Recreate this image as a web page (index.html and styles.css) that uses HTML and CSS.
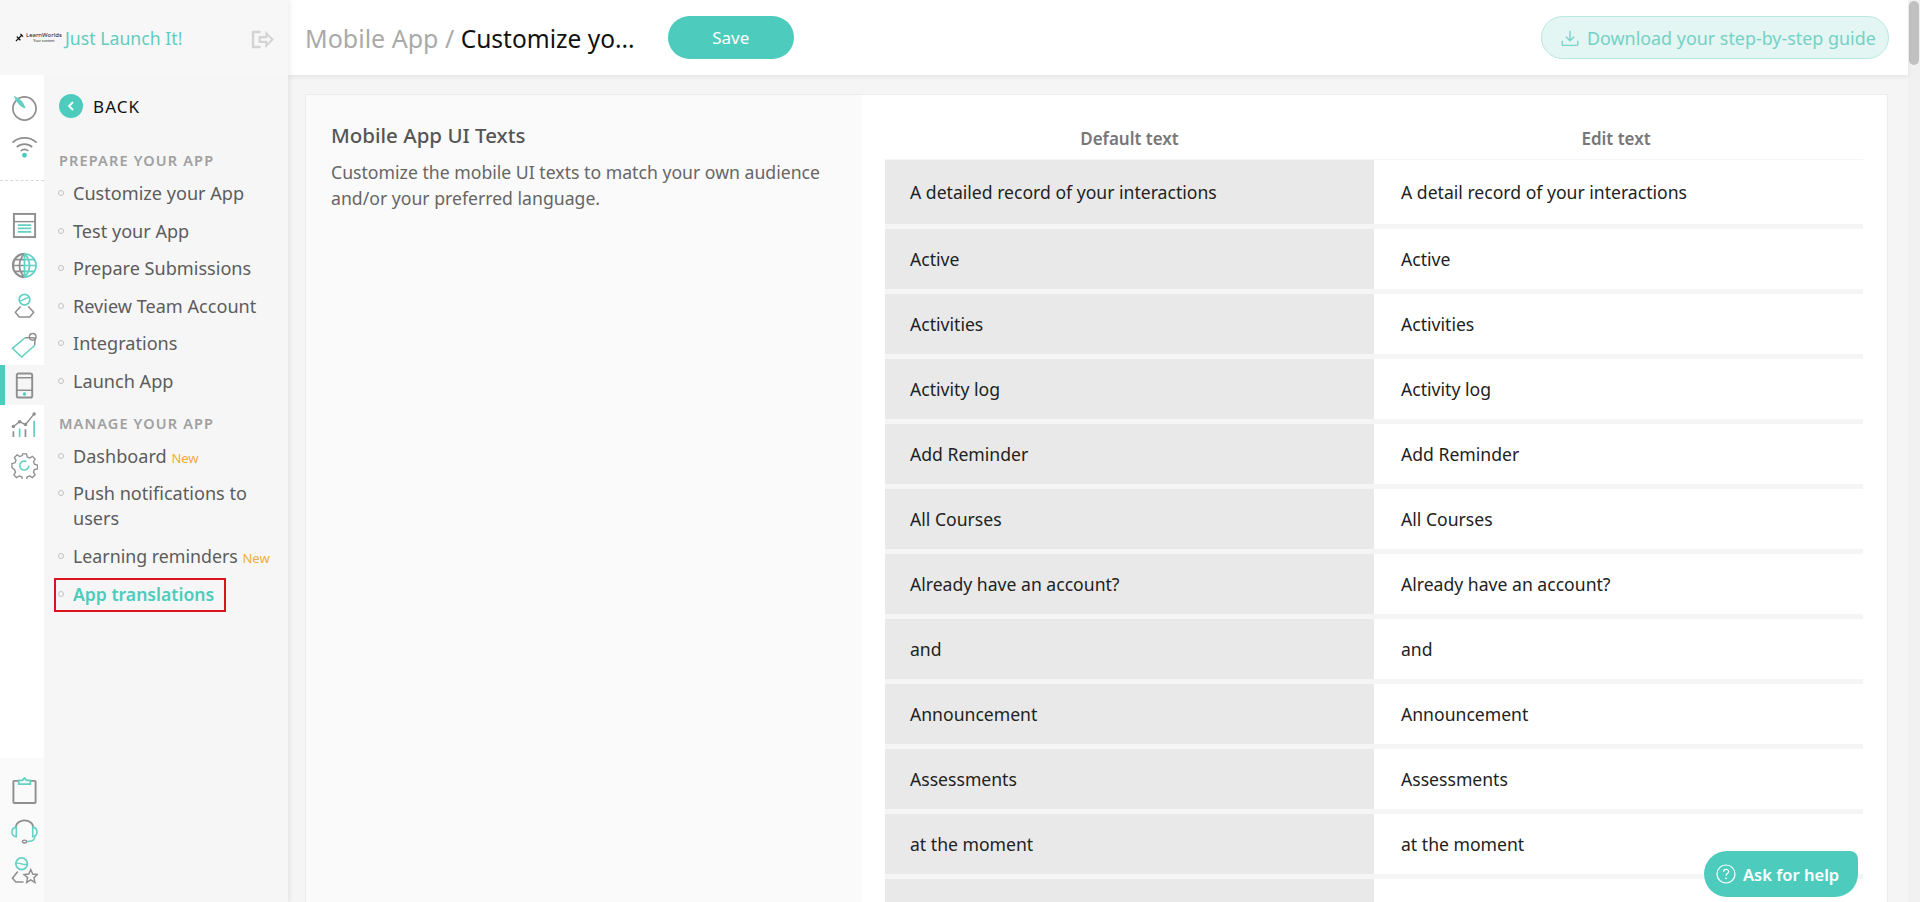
FILE: index.html
```html
<!DOCTYPE html>
<html lang="en">
<head>
<meta charset="utf-8">
<title>Mobile App / Customize your App</title>
<link rel="stylesheet" href="styles.css">
</head>
<body>
<div class="app">
  <aside class="sidebar">
    <div class="brand">
      <div class="logo">
        <svg class="logo-mark" viewBox="0 0 10 10"><path d="M1 9 8 2M2 4l4 4M6 1l3 3" fill="none" stroke="#111" stroke-width="1.4"/></svg>
        <div class="logo-words"><span class="logo-name">LearnWorlds</span><span class="logo-sub">Your content</span></div>
      </div>
      <span class="brand-name">Just Launch It!</span>
      <svg class="exit" viewBox="0 0 24 20"><path d="M10 2H2v16h8" fill="none" stroke="#d4d4d4" stroke-width="2.6"/><path d="M9 7.500h7V3.500l6.500 6.500-6.500 6.500v-4H9z" fill="none" stroke="#d4d4d4" stroke-width="2.200"/></svg>
    </div>
    <div class="side-body">
      <div class="rail">
        <div class="rail-top">
          <div class="rail-item"><svg viewBox="0 0 28 28"><circle cx="14" cy="15" r="12" fill="none" stroke="#8f8f8f" stroke-width="1.800"/><path d="M3 2c6 2 11 7 12 13-5-1-10-7-12-13z" fill="#62d0c2"/></svg></div>
          <div class="rail-item"><svg viewBox="0 0 28 28"><g fill="none" stroke="#8f8f8f" stroke-width="1.800"><path d="M1.500 9c7-6.500 18-6.500 25 0"/><path d="M6 13.500c4.500-4 11.500-4 16 0"/><path d="M10 17.500c2.500-1.800 5.500-1.800 8 0"/></g><circle cx="14" cy="22" r="2.500" fill="#4dccbd"/></svg></div>
        </div>
        <div class="rail-main">
          <div class="rail-item"><svg viewBox="0 0 28 28"><rect x="3" y="2" width="22" height="24" fill="none" stroke="#8f8f8f" stroke-width="2"/><path d="M3 10h22" stroke="#8f8f8f" stroke-width="1.500"/><path d="M7 13.500h14M7 17h14M7 20.500h14" stroke="#62d0c2" stroke-width="1.800"/></svg></div>
          <div class="rail-item"><svg viewBox="0 0 28 28"><g fill="none" stroke-width="1.800"><path d="M14 2a12 12 0 0 0 0 24" stroke="#8f8f8f" stroke-width="2.200"/><path d="M14 2a12 12 0 0 1 0 24" stroke="#62d0c2"/><path d="M14 2c-7 7-7 17 0 24M2 14h12M3.500 8h10M3.500 20h10" stroke="#8f8f8f"/><path d="M14 2c7 7 7 17 0 24M14 2v24M14 14h12M14 8h10.500M14 20h10.500" stroke="#62d0c2"/></g></svg></div>
          <div class="rail-item"><svg viewBox="0 0 28 28"><circle cx="14" cy="8" r="5.500" fill="none" stroke="#62d0c2" stroke-width="1.800"/><path d="M9.500 9.500 18 5.500" stroke="#62d0c2" stroke-width="1.500"/><path d="M10 15l-5.500 6 4 5h11l4-5-5.500-6" fill="none" stroke="#8f8f8f" stroke-width="1.600"/></svg></div>
          <div class="rail-item"><svg viewBox="0 0 28 28"><path d="M14.500 6H22l3 .5-.5 7.500" fill="none" stroke="#8f8f8f" stroke-width="1.600"/><path d="M14.500 6 1.500 17l9.500 9L24.500 14" fill="none" stroke="#62d0c2" stroke-width="1.600"/><circle cx="22.500" cy="5" r="3.500" fill="none" stroke="#8f8f8f" stroke-width="1.500"/></svg></div>
          <div class="rail-item is-active"><svg viewBox="0 0 28 28"><rect x="6" y="1.500" width="16" height="25" rx="2" fill="none" stroke="#8f8f8f" stroke-width="2"/><path d="M6 6h16M6 19h16" stroke="#8f8f8f" stroke-width="1.500"/><circle cx="14" cy="22.800" r="1.700" fill="#4dccbd"/></svg></div>
          <div class="rail-item"><svg viewBox="0 0 28 28"><path d="M2.500 15 9 10l6 3 9-11" fill="none" stroke="#8f8f8f" stroke-width="1.400"/><g fill="#8f8f8f"><circle cx="2.500" cy="15" r="1.800"/><circle cx="9" cy="10" r="1.800"/><circle cx="15" cy="13" r="1.800"/><circle cx="24" cy="2" r="1.800"/></g><path d="M2.500 20v6M15 18v8" stroke="#8f8f8f" stroke-width="1.800"/><path d="M9 17v9M24 9v17" stroke="#62d0c2" stroke-width="1.800"/></svg></div>
          <div class="rail-item"><svg viewBox="0 0 28 28"><path d="M12 2h4l.8 3.200 2.600 1 2.800-1.700 2.800 2.800-1.700 2.800 1 2.600 3.200.8v4l-3.200.8-1 2.600 1.700 2.800-2.800 2.800-2.800-1.700-2.600 1-.8 3.200h-4l-.8-3.200-2.600-1-2.800 1.700-2.800-2.800 1.700-2.800-1-2.600L1 16v-4l3.200-.8 1-2.600-1.700-2.800 2.800-2.800 2.800 1.700 2.600-1z" fill="none" stroke="#8f8f8f" stroke-width="1.400"/><path d="M18.500 14a4.700 4.700 0 1 1-2.500-4.200" fill="none" stroke="#62d0c2" stroke-width="1.600"/></svg></div>
        </div>
        <div class="rail-bottom">
          <div class="rail-item"><svg viewBox="0 0 28 28"><path d="M8 4H3.500a1 1 0 0 0-1 1v21a1 1 0 0 0 1 1h21a1 1 0 0 0 1-1V5a1 1 0 0 0-1-1H20" fill="none" stroke="#8f8f8f" stroke-width="2"/><path d="M8 7.500V3.500h4L14 1l2 2.500h4v4z" fill="none" stroke="#62d0c2" stroke-width="1.800"/></svg></div>
          <div class="rail-item"><svg viewBox="0 0 28 28"><path d="M5 11C5 1 23 1 23 11" fill="none" stroke="#8f8f8f" stroke-width="1.800"/><path d="M5.500 10.500C2.500 11 1 13 1 15.500S2.500 20 5.500 20.500zM22.500 10.500c3 .5 4.500 2.500 4.500 5s-1.500 4.500-4.500 5z" fill="none" stroke="#62d0c2" stroke-width="1.600"/><path d="M25 21c-1 3-4 4.500-8 4.500" fill="none" stroke="#62d0c2" stroke-width="1.500"/><ellipse cx="14" cy="25.500" rx="2.200" ry="1.500" fill="none" stroke="#8f8f8f" stroke-width="1.400"/></svg></div>
          <div class="rail-item"><svg viewBox="0 0 28 28"><circle cx="11" cy="7" r="6" fill="none" stroke="#62d0c2" stroke-width="1.800"/><path d="M5.500 6.500c4-1 7 2.500 11 1" fill="none" stroke="#62d0c2" stroke-width="1.500"/><path d="M7 15 1.500 22l3.500 4h8" fill="none" stroke="#8f8f8f" stroke-width="1.600"/><path d="m20.500 13 2 4.600 5 .5-3.700 3.300 1 5-4.300-2.600-4.300 2.600 1-5-3.700-3.300 5-.5z" fill="none" stroke="#8f8f8f" stroke-width="1.500"/></svg></div>
        </div>
      </div>
      <nav class="nav">
        <div class="back">
          <span class="back-circle"><svg viewBox="0 0 12 12"><path d="M8 2 4 6l4 4" fill="none" stroke="#fff" stroke-width="1.800"/></svg></span>
          <span class="back-label">BACK</span>
        </div>
        <div class="nav-label nav-label-first">PREPARE YOUR APP</div>
        <div class="nav-item">Customize your App</div>
        <div class="nav-item">Test your App</div>
        <div class="nav-item">Prepare Submissions</div>
        <div class="nav-item">Review Team Account</div>
        <div class="nav-item">Integrations</div>
        <div class="nav-item">Launch App</div>
        <div class="nav-label">MANAGE YOUR APP</div>
        <div class="nav-item">Dashboard <span class="new">New</span></div>
        <div class="nav-item nav-item-wrap">Push notifications to users</div>
        <div class="nav-item nav-item-tight">Learning reminders <span class="new">New</span></div>
        <div class="nav-item is-current">App translations</div>
      </nav>
    </div>
  </aside>

  <main class="main">
    <header class="topbar">
      <h1 class="crumbs"><span class="crumb-parent">Mobile App / </span><span class="crumb-current">Customize yo...</span></h1>
      <button class="save">Save</button>
      <div class="download">
        <svg viewBox="0 0 22 22"><path d="M11 2v12M6 9.500l5 5 5-5M1.500 14.500v4.500a1 1 0 0 0 1 1h17a1 1 0 0 0 1-1v-4.500" fill="none" stroke="#75d5c9" stroke-width="1.700"/></svg>
        <span>Download your step-by-step guide</span>
      </div>
    </header>
    <div class="content">
      <section class="card">
        <div class="intro">
          <h2 class="intro-title">Mobile App UI Texts</h2>
          <p class="intro-text">Customize the mobile UI texts to match your own audience and/or your preferred language.</p>
        </div>
        <div class="editor">
          <div class="thead"><div>Default text</div><div class="thead-edit">Edit text</div></div>
          <div class="row row-first"><div class="cell-default">A detailed record of your interactions</div><div class="cell-edit">A detail record of your interactions</div></div>
          <div class="row"><div class="cell-default">Active</div><div class="cell-edit">Active</div></div>
          <div class="row"><div class="cell-default">Activities</div><div class="cell-edit">Activities</div></div>
          <div class="row"><div class="cell-default">Activity log</div><div class="cell-edit">Activity log</div></div>
          <div class="row"><div class="cell-default">Add Reminder</div><div class="cell-edit">Add Reminder</div></div>
          <div class="row"><div class="cell-default">All Courses</div><div class="cell-edit">All Courses</div></div>
          <div class="row"><div class="cell-default">Already have an account?</div><div class="cell-edit">Already have an account?</div></div>
          <div class="row"><div class="cell-default">and</div><div class="cell-edit">and</div></div>
          <div class="row"><div class="cell-default">Announcement</div><div class="cell-edit">Announcement</div></div>
          <div class="row"><div class="cell-default">Assessments</div><div class="cell-edit">Assessments</div></div>
          <div class="row"><div class="cell-default">at the moment</div><div class="cell-edit">at the moment</div></div>
          <div class="row"><div class="cell-default"></div><div class="cell-edit"></div></div>
        </div>
      </section>
    </div>
    <div class="help">
      <svg viewBox="0 0 20 20"><circle cx="10" cy="10" r="9" fill="none" stroke="#fff" stroke-width="1.200"/><path d="M7.500 7.800c0-3.300 5.200-3.300 5.200-.2 0 2-2.700 2-2.700 4.200" fill="none" stroke="#fff" stroke-width="1.200"/><circle cx="10" cy="14.300" r=".9" fill="#fff"/></svg>
      <span>Ask for help</span>
    </div>
  </main>

  <div class="scrollbar"><div class="thumb"></div></div>
</div>
</body>
</html>
```

FILE: styles.css
```css
*, *::before, *::after { box-sizing: border-box; }
html, body { margin: 0; height: 100%; overflow: hidden; }
body {
  font-family: "Noto Sans", "Open Sans", sans-serif;
  color: #222;
  background: #f5f5f5;
}
.app { display: flex; height: 902px; overflow: hidden; }

/* Sidebar */
.sidebar {
  width: 288px;
  flex: none;
  display: flex;
  flex-direction: column;
  background: #f6f6f7;
  box-shadow: 2px 0 5px rgba(0, 0, 0, .07);
  position: relative;
  z-index: 2;
}
.brand {
  height: 75px;
  flex: none;
  display: flex;
  align-items: center;
  padding-left: 15px;
  background: #f7f7f8;
  position: relative;
}
.logo { width: 46px; display: flex; align-items: center; gap: 2px; color: #111; }
.logo-mark { width: 9px; height: 9px; flex: none; }
.logo-words { display: flex; flex-direction: column; line-height: 5px; }
.logo-name { font-size: 6px; white-space: nowrap; }
.logo-sub { font-size: 3.500px; white-space: nowrap; text-align: center; }
.brand-name { margin-left: 4px; font-size: 17.700px; color: #5fcdbf; white-space: nowrap; }
.exit { width: 23px; height: 19px; position: absolute; left: 251px; top: 30px; }

.side-body { flex: 1; display: flex; min-height: 0; }
.rail { width: 44px; flex: none; display: flex; flex-direction: column; background: #fff; }
.rail-item { height: 40px; display: flex; align-items: center; justify-content: center; padding-left: 5px; }
.rail-item svg { width: 27px; height: 27px; }
.rail-top { padding: 12px 0 13px; border-bottom: 1px dashed #d8d8d8; }
.rail-main { flex: 1; padding-top: 24px; }
.rail-bottom { padding: 12px 0; background: #fafafb; }
.rail-item.is-active { background: #f6f6f7; border-left: 5px solid #4dccbd; padding-left: 0; }

.nav { flex: 1; padding: 11px 0 0 15px; }
.back { height: 40px; display: flex; align-items: center; gap: 10px; }
.back-circle {
  width: 24px;
  height: 24px;
  border-radius: 50%;
  background: #4dccbd;
  display: flex;
  align-items: center;
  justify-content: center;
}
.back-circle svg { width: 12px; height: 12px; }
.back-label { font-size: 17px; letter-spacing: 1.100px; color: #111; }
.nav-label {
  height: 24px;
  line-height: 24px;
  margin: 11px 0 3px;
  font-size: 14.500px;
  font-weight: 600;
  letter-spacing: 1.150px;
  color: #a0a0a0;
}
.nav-label-first { margin-top: 22px; }
.nav-item {
  position: relative;
  padding: 6.250px 0 6.250px 14px;
  width: 218px;
  font-size: 18.100px;
  line-height: 25px;
  color: #5c5c5c;
}
.nav-item::before {
  content: "";
  position: absolute;
  left: -1px;
  top: 15px;
  width: 6px;
  height: 6px;
  border: 1px solid #c2c2c2;
  border-radius: 50%;
}
.nav-item-wrap { margin-top: -1px; margin-bottom: 1px; }
.nav-item-tight { font-size: 17.800px; }
.new { font-size: 13px; line-height: 1; color: #f4ab3c; }
.is-current { color: #4dccbd; font-weight: 600; font-size: 17.600px; }
.is-current::after {
  content: "";
  position: absolute;
  left: -5px;
  top: 2px;
  width: 172px;
  height: 34px;
  border: 2px solid #d9141e;
}

/* Main */
.main { flex: 1; min-width: 0; display: flex; flex-direction: column; position: relative; }
.topbar {
  height: 75px;
  flex: none;
  display: flex;
  align-items: center;
  padding: 0 19px 0 17px;
  background: #fff;
  box-shadow: 0 2px 5px rgba(0, 0, 0, .07);
  position: relative;
  z-index: 1;
}
.crumbs { margin: 0; font-size: 25px; font-weight: 400; white-space: nowrap; }
.crumb-parent { color: #aaa; }
.crumb-current { color: #111; font-size: 24.500px; }
.save {
  margin-left: 33px;
  width: 126px;
  height: 43px;
  border: 0;
  border-radius: 22px;
  background: #4dccbd;
  color: #fff;
  font: 17px "Noto Sans", sans-serif;
}
.download {
  margin-left: auto;
  width: 348px;
  height: 43px;
  display: flex;
  align-items: center;
  gap: 8px;
  padding-left: 19px;
  border: 1px solid #b9e8e1;
  border-radius: 22px;
  background: #e3f6f3;
  color: #75d1c5;
  font-size: 17.900px;
  white-space: nowrap;
}
.download svg { width: 18px; height: 18px; flex: none; }
.content { flex: 1; min-height: 0; padding: 19px 20px 0 17px; background: #f5f5f5; }
.card {
  height: 100%;
  display: flex;
  overflow: hidden;
  border: 1px solid #ececec;
  border-bottom: 0;
  background: #fff;
}
.intro { width: 555px; flex: none; padding: 26px 20px 0 25px; background: #fafafa; }
.intro-title { margin: 0 0 10px; font-size: 20.500px; line-height: 28px; font-weight: 500; color: #555; }
.intro-text { margin: 0; font-size: 17.650px; line-height: 26px; color: #666; }
.editor { flex: 1; min-width: 0; padding: 0 24px 0 24px; }
.thead {
  height: 65px;
  display: grid;
  grid-template-columns: 489px 489px;
  border-bottom: 1px solid #f5f5f5;
  text-align: center;
  font-size: 17px;
  font-weight: 600;
  line-height: 88px;
  color: #777;
}
.thead-edit { padding-right: 5px; }
.row {
  height: 65px;
  display: grid;
  grid-template-columns: 489px 489px;
  border-bottom: 5px solid #f5f5f5;
  font-size: 17.600px;
}
.row-first { height: 69px; }
.row-first > div { padding-bottom: 1px; }
.cell-default { display: flex; align-items: center; padding-left: 25px; background: #e9e9e9; }
.cell-edit { display: flex; align-items: center; padding-left: 27px; }
.help {
  position: absolute;
  left: 1416px;
  top: 851px;
  width: 154px;
  height: 46px;
  display: flex;
  align-items: center;
  gap: 7px;
  padding-left: 12px;
  border-radius: 23px 8px 23px 23px;
  background: #4dccbd;
  color: #fff;
  font-size: 16.500px;
  font-weight: 600;
  z-index: 3;
}
.help svg { width: 20px; height: 20px; flex: none; }

/* Scrollbar */
.scrollbar { width: 12px; flex: none; background: #f1f1f1; padding: 1px; }
.thumb { height: 64px; border-radius: 5px; background: #c1c1c1; }
```
